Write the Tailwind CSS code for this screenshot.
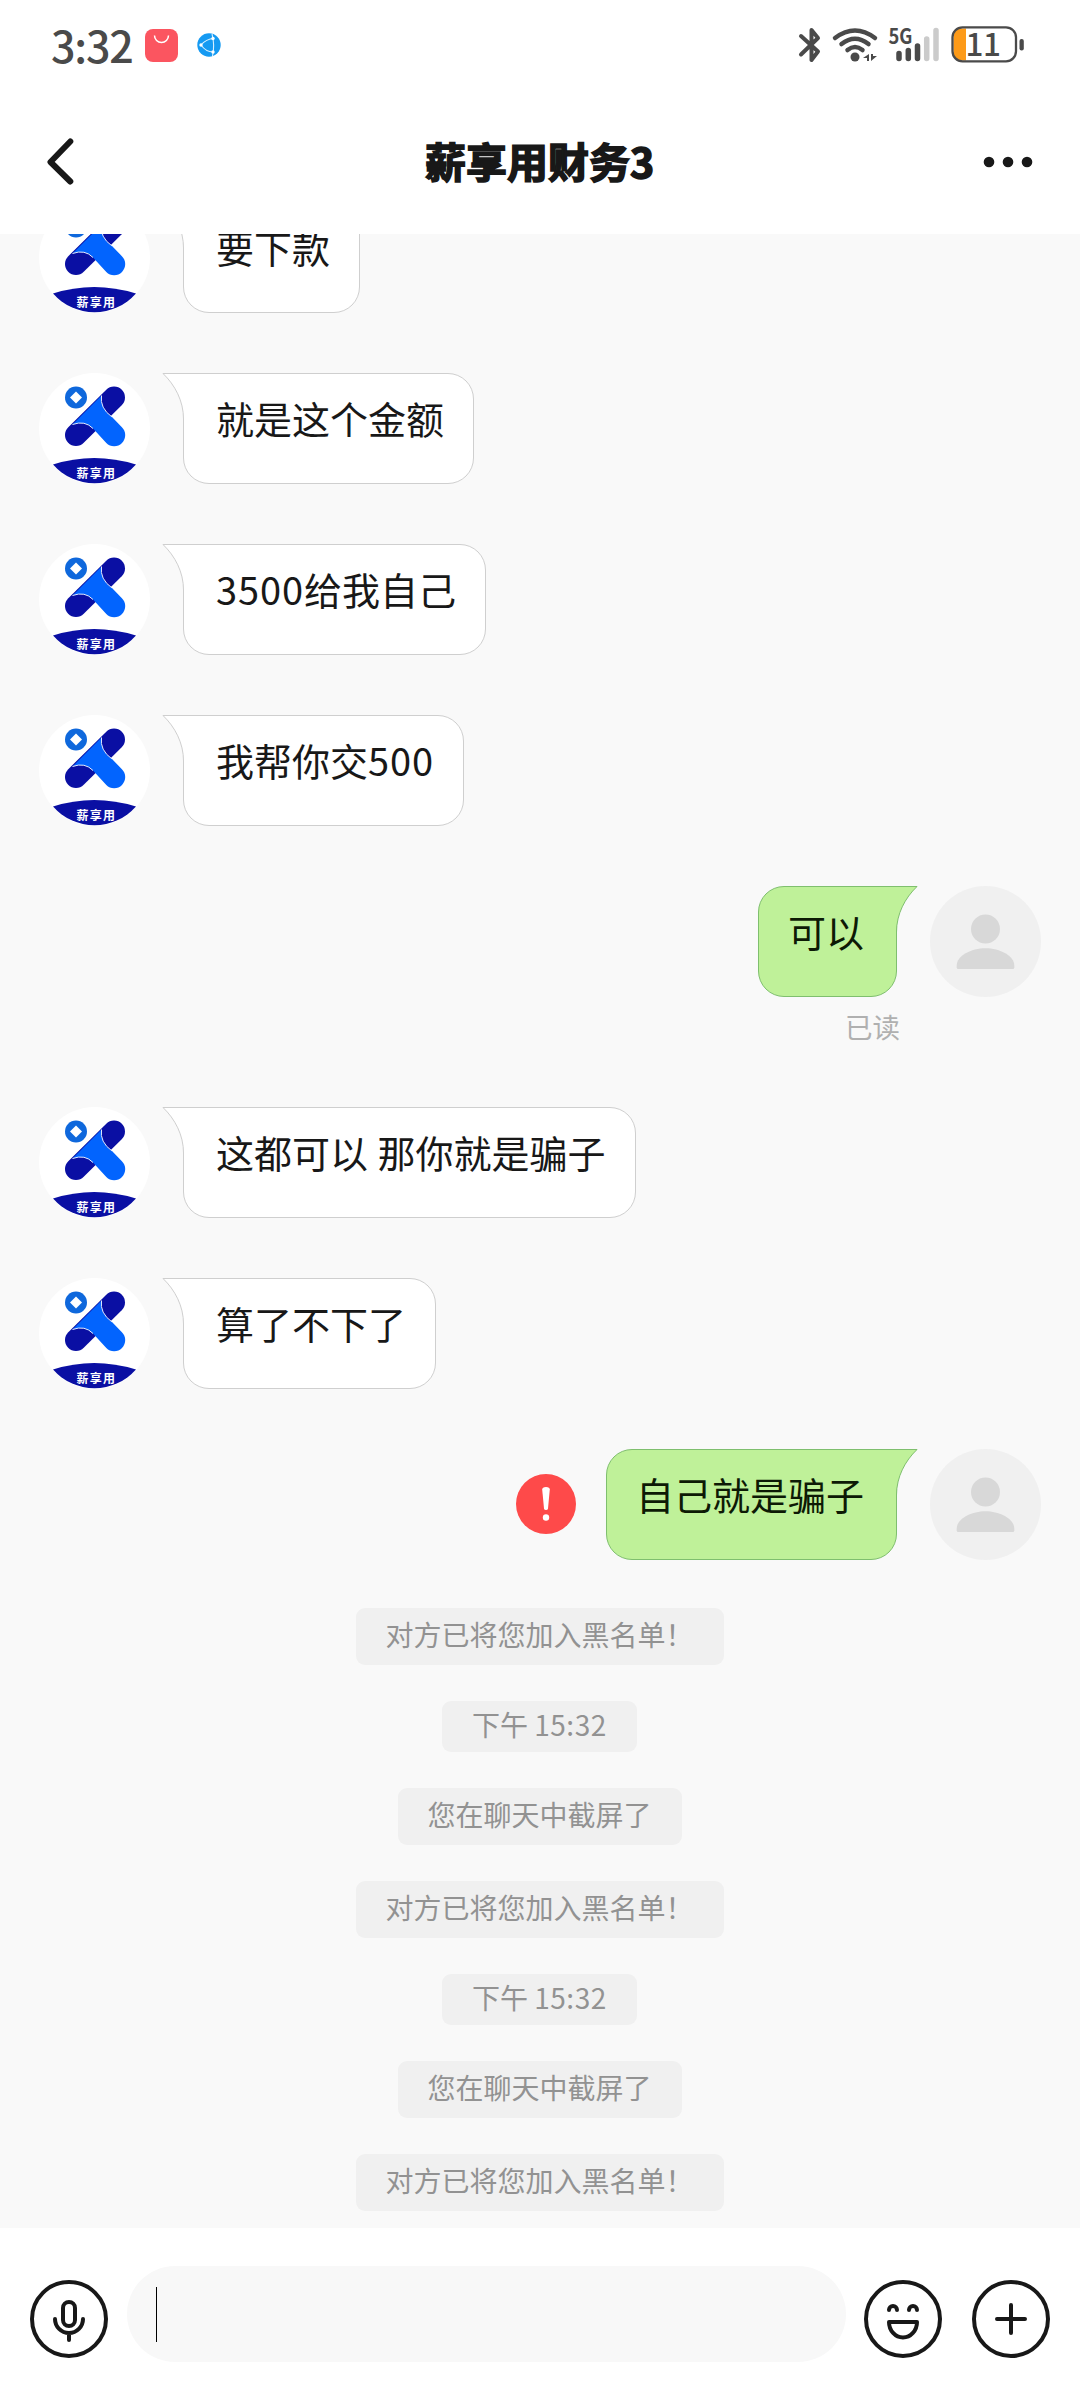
<!DOCTYPE html>
<html lang="zh-CN">
<head>
<meta charset="utf-8">
<title>薪享用财务3</title>
<script src="https://cdn.jsdelivr.net/npm/@tailwindcss/browser@4"></script>
</head>
<body class="w-[1080px] h-[2400px] overflow-hidden bg-white font-['Noto_Sans_CJK_SC',sans-serif] text-[#181818]">
<svg class="hidden" xmlns="http://www.w3.org/2000/svg">
  <symbol id="logo" viewBox="0 0 111 111">
    <circle cx="55.5" cy="55.5" r="55.5" fill="#fff"/>
    <circle cx="37" cy="24.5" r="11" fill="#0f68dc"/>
    <path d="M37 18.5 L43 24.5 L37 30.5 L31 24.5 Z" fill="#fff"/>
    <path d="M75 24.5 L37 62" stroke="#0a0fa3" stroke-width="22" stroke-linecap="round"/>
    <path d="M62.5 22.5 L33.5 51.5 Q46 47 54 55.5 L67.3 70 A11 11 0 0 0 82.9 54.2 L73 44 Q60.500 35 62.500 22.500 Z" fill="#0264fe"/>
    <path d="M33.500 51.500 Q46 47 54 55.500 M73 44 Q60.500 35 62.500 22.500" fill="none" stroke="#e4ecff" stroke-width="1"/>
    <path d="M14 91.500 Q55 78.500 97 91.500 A55.500 55.500 0 0 1 14 91.500 Z" fill="#0a0fa3"/>
    <text x="37.500" y="104.500" font-size="12" font-weight="700" fill="#fff" textLength="38.500">薪享用</text>
  </symbol>
  <symbol id="person" viewBox="0 0 111 111">
    <circle cx="55.500" cy="55.500" r="55.500" fill="#f0f0f0"/>
    <circle cx="55.500" cy="43" r="14.500" fill="#d8d8d8"/>
    <path d="M26.700 79.500 C26.700 70 41 62.300 55.500 62.300 S84.300 70 84.300 79.500 V81.500 Q84.300 83 82.800 83 H28.200 Q26.700 83 26.700 81.500 Z" fill="#d8d8d8"/>
  </symbol>
  <symbol id="tail-left" viewBox="0 0 24 46">
    <path d="M24 0.500 H1 C13 12 21.500 28 21.500 46 H24 Z" fill="#fff"/>
    <path d="M24 0.500 H1 C13 12 21.500 28 21.500 46" fill="none" stroke="#cfcfcf"/>
  </symbol>
  <symbol id="tail-right" viewBox="0 0 24 46">
    <path d="M0 0.500 H23 C11 12 2.500 28 2.500 46 H0 Z" fill="#bff199"/>
    <path d="M0 0.500 H23 C11 12 2.500 28 2.500 46" fill="none" stroke="#7fbf6e"/>
  </symbol>
</svg>

<div class="flex h-full flex-col">
  <!-- Status bar -->
  <header class="flex h-[90px] shrink-0 items-center pl-[51px] text-[#4a4a4a]">
    <span class="w-[94px] pb-0.5 text-[43px] font-medium leading-none tracking-[-1.2px]">3:32</span>
    <svg class="size-[33px]" viewBox="0 0 33 33"><rect width="33" height="33" rx="8" fill="#fb5560"/><path d="M9.500 6.500 A7 7 0 0 0 23.500 6.500" fill="none" stroke="#fff" stroke-width="1.500"/></svg>
    <svg class="ml-[19px] size-[24px]" viewBox="0 0 24 24"><circle cx="12" cy="12" r="11.700" fill="#159af2"/><path d="M4 12 Q9 6 17 5.500 M4 12 Q9 19 16 19 M15 1 Q18 12 15.500 23" fill="none" stroke="#d9f0ff" stroke-width="1.100"/><circle cx="4" cy="12" r="1.700" fill="#fff"/><circle cx="16" cy="5.500" r="1.700" fill="#fff"/><circle cx="16" cy="19" r="1.700" fill="#fff"/></svg>
    <svg class="ml-[577px] h-[70px] w-[226px]" viewBox="798 10 226 70">
      <g fill="none" stroke="#4a4a4a" stroke-linecap="round" stroke-linejoin="round">
        <path d="M801 36 L818 51.500 L811.500 60 V30 L818 38 L801 54.500" stroke-width="4"/>
        <path d="M835 38 Q855 23 875 38" stroke-width="4.500"/>
        <path d="M841.500 44 Q855 33.500 868.500 44" stroke-width="4.500"/>
        <path d="M847.500 50 Q855 44 862.500 50" stroke-width="4.500"/>
      </g>
      <circle cx="855" cy="57" r="4.500" fill="#4a4a4a"/>
      <path d="M863 58 L869 54 V61 H867 V58 Z M871 54 V61 L877 56 H873 V54 Z" fill="#4a4a4a"/>
      <text x="888.500" y="43.500" font-size="21" font-weight="700" fill="#4a4a4a" textLength="24" lengthAdjust="spacingAndGlyphs">5G</text>
      <g stroke-width="5.500" stroke-linecap="round" stroke="#4a4a4a">
        <path d="M899 53.500 V58.500 M908.300 50.500 V58.500 M917.500 46 V58.500"/>
        <path d="M926.700 39 V58.500 M936 30.500 V58.500" stroke="#cbcbcb"/>
      </g>
      <path d="M966 28.500 H961 Q953.500 29 953.500 37 V52 Q953.500 60 961 60.500 H966 Z" fill="#fd9a18"/>
      <rect x="952.500" y="27.300" width="63.500" height="34" rx="10" fill="none" stroke="#4a4a4a" stroke-width="2.300"/>
      <rect x="1019.500" y="39" width="4.300" height="11.500" rx="2" fill="#4a4a4a"/>
      <text x="965.500" y="56" font-size="31.500" font-weight="500" fill="#4a4a4a" textLength="35.500">11</text>
    </svg>
  </header>

  <!-- Title bar -->
  <nav class="flex h-[144px] shrink-0 items-center pl-[45px] pr-[47px]">
    <svg class="h-[48px] w-[60px]" viewBox="0 0 60 48"><path d="M25.300 3.500 L5.500 24 L25.300 43.500" fill="none" stroke="#181818" stroke-width="6" stroke-linecap="round" stroke-linejoin="round"/></svg>
    <h1 class="ml-[320px] flex-1 pb-1 text-[41px] leading-none font-bold [-webkit-text-stroke:1.6px_#181818]">薪享用财务3</h1>
    <svg class="h-[12px] w-[50px]" viewBox="0 0 50 12"><g fill="#181818"><circle cx="6" cy="6" r="5.300"/><circle cx="25" cy="6" r="5.300"/><circle cx="44" cy="6" r="5.300"/></g></svg>
  </nav>

  <!-- Conversation -->
  <main class="flex h-[1994px] shrink-0 flex-col overflow-hidden bg-[#f9f9f9]">
    <div class="-mt-8 flex shrink-0 flex-col gap-[60px] pr-[39px] pl-[39px] text-[38px] leading-none">
      <div class="flex h-[111px] gap-[33px]">
        <svg class="size-[111px]"><use href="#logo"/></svg>
        <div class="relative flex w-[177px] items-center rounded-[26px] rounded-tl-none border border-[#cfcfcf] bg-white pb-[21px] pl-8 whitespace-nowrap"><svg class="absolute -top-px -left-[22px] h-[46px] w-[24px]"><use href="#tail-left"/></svg>要下款</div>
      </div>
      <div class="flex h-[111px] gap-[33px]">
        <svg class="size-[111px]"><use href="#logo"/></svg>
        <div class="relative flex w-[291px] items-center rounded-[26px] rounded-tl-none border border-[#cfcfcf] bg-white pb-[21px] pl-8 whitespace-nowrap"><svg class="absolute -top-px -left-[22px] h-[46px] w-[24px]"><use href="#tail-left"/></svg>就是这个金额</div>
      </div>
      <div class="flex h-[111px] gap-[33px]">
        <svg class="size-[111px]"><use href="#logo"/></svg>
        <div class="relative flex w-[303px] items-center rounded-[26px] rounded-tl-none border border-[#cfcfcf] bg-white pb-[21px] pl-8 whitespace-nowrap"><svg class="absolute -top-px -left-[22px] h-[46px] w-[24px]"><use href="#tail-left"/></svg><span class="tracking-[0.9px]">3500</span>给我自己</div>
      </div>
      <div class="flex h-[111px] gap-[33px]">
        <svg class="size-[111px]"><use href="#logo"/></svg>
        <div class="relative flex w-[281px] items-center rounded-[26px] rounded-tl-none border border-[#cfcfcf] bg-white pb-[21px] pl-8 whitespace-nowrap"><svg class="absolute -top-px -left-[22px] h-[46px] w-[24px]"><use href="#tail-left"/></svg>我帮你交<span class="tracking-[0.9px]">500</span></div>
      </div>
      <div class="flex h-[161px] flex-col">
        <div class="flex h-[111px] justify-end gap-[33px]">
          <div class="relative flex w-[139px] items-center rounded-[26px] rounded-tr-none border border-[#7fbf6e] bg-[#bff199] pb-[21px] pl-[29px] whitespace-nowrap text-[#0d1a05]"><svg class="absolute -top-px -right-[22px] h-[46px] w-[24px]"><use href="#tail-right"/></svg>可以</div>
          <svg class="size-[111px]"><use href="#person"/></svg>
        </div>
        <span class="mt-[16px] pr-[141px] text-right text-[27.500px] text-[#b0b0b0]">已读</span>
      </div>
      <div class="flex h-[111px] gap-[33px]">
        <svg class="size-[111px]"><use href="#logo"/></svg>
        <div class="relative flex w-[453px] items-center rounded-[26px] rounded-tl-none border border-[#cfcfcf] bg-white pb-[21px] pl-8 whitespace-nowrap [word-spacing:1px]"><svg class="absolute -top-px -left-[22px] h-[46px] w-[24px]"><use href="#tail-left"/></svg>这都可以 那你就是骗子</div>
      </div>
      <div class="flex h-[111px] gap-[33px]">
        <svg class="size-[111px]"><use href="#logo"/></svg>
        <div class="relative flex w-[253px] items-center rounded-[26px] rounded-tl-none border border-[#cfcfcf] bg-white pb-[21px] pl-8 whitespace-nowrap"><svg class="absolute -top-px -left-[22px] h-[46px] w-[24px]"><use href="#tail-left"/></svg>算了不下了</div>
      </div>
      <div class="flex h-[111px] items-center justify-end">
        <svg class="mr-[30px] mb-px size-[60px]" viewBox="0 0 60 60"><circle cx="30" cy="30" r="30" fill="#fe4a4a"/><path d="M26.200 15.500 Q26.200 13 30 13 T33.800 15.500 L32 34.500 Q31.800 36 30 36 T28 34.500 Z" fill="#fff"/><circle cx="30" cy="43.500" r="3.200" fill="#fff"/></svg>
        <div class="relative mr-[33px] flex h-[111px] w-[291px] items-center rounded-[26px] rounded-tr-none border border-[#7fbf6e] bg-[#bff199] pb-[21px] pl-[29px] whitespace-nowrap text-[#0d1a05]"><svg class="absolute -top-px -right-[22px] h-[46px] w-[24px]"><use href="#tail-right"/></svg>自己就是骗子</div>
        <svg class="size-[111px]"><use href="#person"/></svg>
      </div>
    </div>

    <div class="mt-[48px] flex flex-col items-center gap-9 pr-px text-[28px] leading-none text-[#929292]">
      <p class="flex h-[57px] w-[368px] items-center rounded-[9px] bg-[#f0f0f0] px-[30px] pb-[5px] whitespace-nowrap">对方已将您加入黑名单！</p>
      <p class="flex h-[51px] w-[195px] items-center rounded-[9px] bg-[#f0f0f0] px-[30px] pb-[5px] whitespace-pre">下午 <span class="tracking-[0.5px]">15:32</span></p>
      <p class="flex h-[57px] w-[284px] items-center rounded-[9px] bg-[#f0f0f0] px-[30px] pb-[5px] whitespace-nowrap">您在聊天中截屏了</p>
      <p class="flex h-[57px] w-[368px] items-center rounded-[9px] bg-[#f0f0f0] px-[30px] pb-[5px] whitespace-nowrap">对方已将您加入黑名单！</p>
      <p class="flex h-[51px] w-[195px] items-center rounded-[9px] bg-[#f0f0f0] px-[30px] pb-[5px] whitespace-pre">下午 <span class="tracking-[0.5px]">15:32</span></p>
      <p class="flex h-[57px] w-[284px] items-center rounded-[9px] bg-[#f0f0f0] px-[30px] pb-[5px] whitespace-nowrap">您在聊天中截屏了</p>
      <p class="flex h-[57px] w-[368px] items-center rounded-[9px] bg-[#f0f0f0] px-[30px] pb-[5px] whitespace-nowrap">对方已将您加入黑名单！</p>
    </div>
  </main>

  <!-- Message composer -->
  <footer class="flex h-[172px] shrink-0 items-start px-[30px] pt-[38px]">
    <svg class="mt-[14px] size-[78px]" viewBox="0 0 78 78" fill="none" stroke="#181818" stroke-width="4" stroke-linecap="round"><circle cx="39" cy="39" r="37"/><rect x="33" y="22" width="12" height="24" rx="6"/><path d="M25 39 A14 14 0 0 0 53 39 M39 53 V60"/></svg>
    <div class="ml-[19px] flex h-[96px] w-[719px] items-center rounded-full bg-[#f8f8f8] pl-[29px]"><i class="h-[55px] w-px bg-black"></i></div>
    <svg class="mt-[14px] ml-[18px] size-[78px]" viewBox="0 0 78 78" fill="none" stroke="#181818" stroke-width="4" stroke-linecap="round" stroke-linejoin="round"><circle cx="39" cy="39" r="37"/><path d="M25 30 A4 4 0 0 1 33 30 M45 30 A4 4 0 0 1 53 30 M25 42 H53 A14 15.500 0 0 1 25 42 Z"/></svg>
    <svg class="mt-[14px] ml-[30px] size-[78px]" viewBox="0 0 78 78" fill="none" stroke="#181818" stroke-width="4" stroke-linecap="round"><circle cx="39" cy="39" r="37"/><path d="M25 39 H53 M39 25 V53"/></svg>
  </footer>
</div>
</body>
</html>
